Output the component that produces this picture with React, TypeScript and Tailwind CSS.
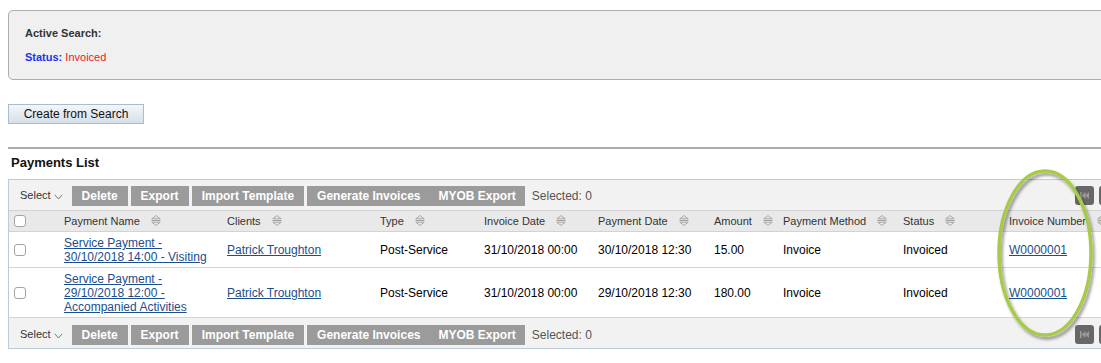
import React from "react";

const SortIcon = () => (
  <svg width="10" height="11" viewBox="0 0 10 11" className="inline-block ml-[11px] align-[-1px]">
    <path d="M0.8 3.8 L5 0.6 L9.2 3.8 Z" fill="none" stroke="#a0a0a0" strokeWidth="0.9" strokeLinejoin="round" />
    <line x1="0.5" y1="5.5" x2="9.5" y2="5.5" stroke="#a0a0a0" strokeWidth="1" />
    <path d="M0.8 7.2 L5 10.4 L9.2 7.2 Z" fill="none" stroke="#a0a0a0" strokeWidth="0.9" strokeLinejoin="round" />
  </svg>
);

const Check = () => (
  <span className="block w-[12px] h-[12px] rounded-[3px] border border-[#a3a3a3] bg-white" />
);

const PagerBtn = () => (
  <span className="flex items-center justify-center w-[19px] h-[19px] rounded-[3px] bg-[#686868]">
    <svg width="11" height="9" viewBox="0 0 11 9">
      <rect x="1" y="1" width="1.6" height="7" fill="#9b9b9b" />
      <path d="M6.5 1 L2.8 4.5 L6.5 8 Z" fill="#9b9b9b" />
      <path d="M10 1 L6.3 4.5 L10 8 Z" fill="#9b9b9b" />
    </svg>
  </span>
);

const Toolbar = ({ className }: { className: string }) => (
  <div className={"flex items-center bg-[#f2f2f2] pl-[11px] " + className}>
    <span className="text-[11px] text-[#333]">Select</span>
    <svg width="9" height="6" viewBox="0 0 9 6" className="ml-[3px] mt-[3px]">
      <path d="M0.8 0.8 L4.5 5 L8.2 0.8" fill="none" stroke="#777" strokeWidth="1" />
    </svg>
    <span className="ml-[9px] h-[20px] flex items-center px-[10px] bg-[#9b9b9b] text-white font-bold text-[12px]">Delete</span>
    <span className="ml-[3px] h-[20px] flex items-center px-[10px] bg-[#9b9b9b] text-white font-bold text-[12px]">Export</span>
    <span className="ml-[3px] h-[20px] flex items-center px-[10px] bg-[#9b9b9b] text-white font-bold text-[12px]">Import Template</span>
    <span className="ml-[3px] h-[20px] flex items-center pl-[10px] pr-[9px] bg-[#9b9b9b] text-white font-bold text-[12px]">Generate Invoices</span>
    <span className="h-[20px] flex items-center px-[9px] bg-[#9b9b9b] text-white font-bold text-[12px]">MYOB Export</span>
    <span className="ml-[7px] text-[12px] text-[#555]">Selected: 0</span>
    <div className="ml-auto pr-[9px] flex gap-[5px]">
      <PagerBtn />
      <PagerBtn />
    </div>
  </div>
);

const headers = [
  "Payment Name",
  "Clients",
  "Type",
  "Invoice Date",
  "Payment Date",
  "Amount",
  "Payment Method",
  "Status",
  "Invoice Number",
];

type Row = {
  name: string[];
  client: string;
  type: string;
  invDate: string;
  payDate: string;
  amount: string;
  method: string;
  status: string;
  invNo: string;
};

const rows: Row[] = [
  {
    name: ["Service Payment -", "30/10/2018 14:00 - Visiting"],
    client: "Patrick Troughton",
    type: "Post-Service",
    invDate: "31/10/2018 00:00",
    payDate: "30/10/2018 12:30",
    amount: "15.00",
    method: "Invoice",
    status: "Invoiced",
    invNo: "W0000001",
  },
  {
    name: ["Service Payment -", "29/10/2018 12:00 -", "Accompanied Activities"],
    client: "Patrick Troughton",
    type: "Post-Service",
    invDate: "31/10/2018 00:00",
    payDate: "29/10/2018 12:30",
    amount: "180.00",
    method: "Invoice",
    status: "Invoiced",
    invNo: "W0000001",
  },
];

export default function App() {
  return (
    <div className="relative w-[1101px] h-[363px] overflow-hidden bg-white font-['Liberation_Sans',Arial,sans-serif] text-black">
      <div className="w-[1128px] pl-[8px] pt-[10px]">
        <div className="w-[1120px] h-[70px] border border-[#acacac] rounded-[5px] bg-[#f0f0f0] pl-[16px] pt-[16px]">
          <div className="text-[11px] leading-[13px] font-bold text-[#333]">Active Search:</div>
          <div className="mt-[11px] text-[11px] leading-[13px]">
            <span className="font-bold text-[#1c33f0]">Status:</span>{" "}
            <span className="text-[#f0141e]">Invoiced</span>
          </div>
        </div>

        <div className="mt-[24px] w-[136px] h-[20px] border border-[#a9bdd2] bg-gradient-to-b from-[#f3f6f9] to-[#d6dfe8] flex items-center justify-center text-[12px] text-[#111]">
          Create from Search
        </div>

        <div className="mt-[23px] w-[1120px] h-[2px] bg-[#ababab]" />

        <div className="mt-[6px] pl-[3px] text-[13px] leading-[15px] font-bold text-[#111]">Payments List</div>

        <div className="mt-[9px] w-[1120px] border border-[#bccbda]">
          <Toolbar className="h-[30px] pt-[1px]" />
          <table className="w-full table-fixed border-collapse">
            <colgroup>
              <col className="w-[47px]" />
              <col className="w-[163px]" />
              <col className="w-[153px]" />
              <col className="w-[104px]" />
              <col className="w-[114px]" />
              <col className="w-[116px]" />
              <col className="w-[69px]" />
              <col className="w-[120px]" />
              <col className="w-[106px]" />
              <col className="w-[126px]" />
            </colgroup>
            <thead>
              <tr className="bg-[#e9e9e9] border-t border-b border-[#d3d3d3] h-[21px]">
                <th className="pl-[5px] p-0 text-left align-middle">
                  <Check />
                </th>
                {headers.map((h) => (
                  <th key={h} className="pl-[8px] p-0 text-left font-normal text-[11px] text-[#333] whitespace-nowrap align-middle">
                    {h}
                    <SortIcon />
                  </th>
                ))}
              </tr>
            </thead>
            <tbody>
              {rows.map((r, i) => (
                <tr key={i} className="border-b border-[#c9d7e5] text-[12px] leading-[14px]">
                  <td className="pl-[5px] pt-[4px] pb-[3px] align-middle">
                    <Check />
                  </td>
                  <td className="pl-[8px] pt-[4px] pb-[3px] align-middle">
                    <span className="text-[#1b4e8b] underline">
                      {r.name.map((l, j) => (
                        <React.Fragment key={j}>
                          {j > 0 && <br />}
                          {l}
                        </React.Fragment>
                      ))}
                    </span>
                  </td>
                  <td className="pl-[8px] pt-[4px] pb-[3px] align-middle">
                    <span className="text-[#1b4e8b] underline">{r.client}</span>
                  </td>
                  <td className="pl-[8px] pt-[4px] pb-[3px] align-middle">{r.type}</td>
                  <td className="pl-[8px] pt-[4px] pb-[3px] align-middle">{r.invDate}</td>
                  <td className="pl-[8px] pt-[4px] pb-[3px] align-middle">{r.payDate}</td>
                  <td className="pl-[8px] pt-[4px] pb-[3px] align-middle">{r.amount}</td>
                  <td className="pl-[8px] pt-[4px] pb-[3px] align-middle">{r.method}</td>
                  <td className="pl-[8px] pt-[4px] pb-[3px] align-middle">{r.status}</td>
                  <td className="pl-[8px] pt-[4px] pb-[3px] align-middle">
                    <span className="text-[#1b4e8b] underline">{r.invNo}</span>
                  </td>
                  <td />
                </tr>
              ))}
            </tbody>
          </table>
          <Toolbar className="h-[30px] pt-[3px]" />
        </div>
      </div>

      <svg
        className="absolute left-[990px] top-[160px]"
        width="115"
        height="195"
        viewBox="0 0 115 195"
      >
        <defs>
          <filter id="sh" x="-20%" y="-20%" width="140%" height="140%">
            <feDropShadow dx="2" dy="3" stdDeviation="1.6" floodColor="#000" floodOpacity="0.4" />
          </filter>
        </defs>
        <ellipse cx="55" cy="93" rx="46" ry="82" fill="none" stroke="#a8ca4a" strokeWidth="3.5" filter="url(#sh)" />
      </svg>
    </div>
  );
}
